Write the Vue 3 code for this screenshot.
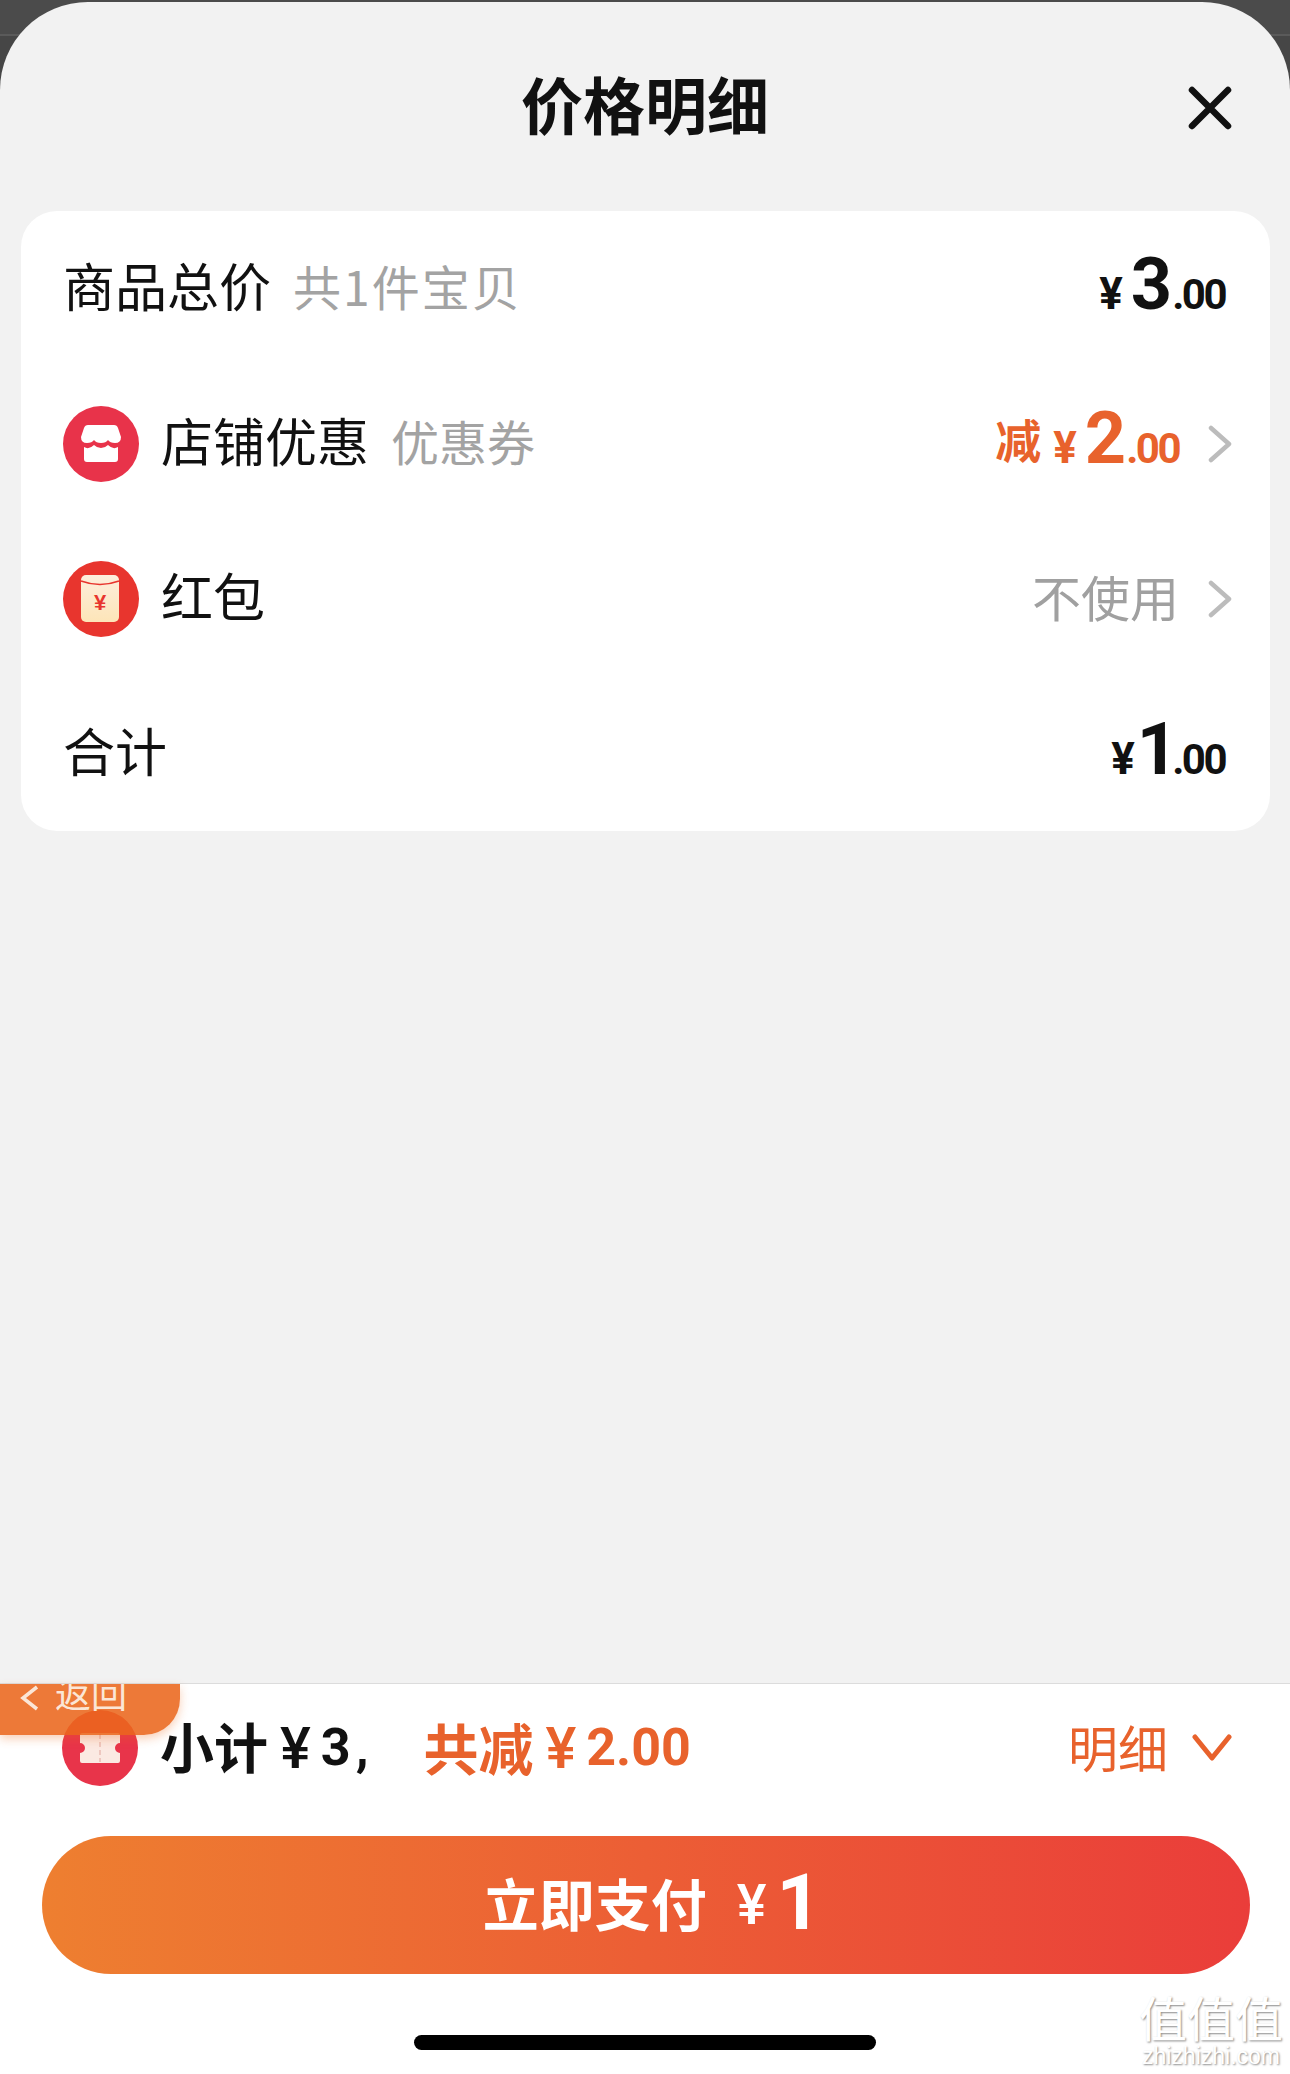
<template>
  <div class="screen">
    <div class="sheet">
      <header class="sheet-head">
        <h1>价格明细</h1>
        <svg class="close" width="44" height="44" viewBox="0 0 44 44">
          <path d="M4 4 L40 40 M40 4 L4 40" stroke="#111" stroke-width="6.5" stroke-linecap="round" fill="none" />
        </svg>
      </header>

      <section class="card">
        <div class="row">
          <span class="label">商品总价</span>
          <span class="sub wide">共1件宝贝</span>
          <span class="price plain">
            <i class="yen">¥</i><b class="big">3</b><i class="cents">.00</i>
          </span>
        </div>

        <div class="row">
          <svg class="badge" width="76" height="76" viewBox="0 0 76 76">
            <circle cx="38" cy="38" r="38" fill="#e8334a" />
            <path fill="#fff" d="M25 19 H51 Q54 19 55 22 L58 31 Q58 37 52 37 Q47 37 45 34 Q43 37 38 37 Q33 37 31 34 Q29 37 24 37 Q18 37 18 31 L21 22 Q22 19 25 19 Z" />
            <path fill="#fff" d="M21 41 Q26 44 31 39 Q34 42 38 42 Q42 42 45 39 Q50 44 55 41 V53 Q55 56 52 56 H24 Q21 56 21 53 Z" />
          </svg>
          <span class="label">店铺优惠</span>
          <span class="sub">优惠券</span>
          <span class="price orange">
            <em class="minus">减</em><i class="yen">¥</i><b class="big">2</b><i class="cents">.00</i>
          </span>
          <svg class="arrow" width="24" height="38" viewBox="0 0 24 38">
            <path d="M3 3 L21 19 L3 35" />
          </svg>
        </div>

        <div class="row">
          <svg class="badge" width="76" height="76" viewBox="0 0 76 76">
            <circle cx="38" cy="38" r="38" fill="#e8352e" />
            <rect x="18" y="14" width="38" height="47" rx="5" fill="url(#packet)" />
            <path d="M18 20 Q37 27 56 20" stroke="#e8352e" stroke-width="1.6" fill="none" />
            <text x="37" y="49" text-anchor="middle" class="packet-yen">¥</text>
            <defs>
              <linearGradient id="packet" x1="0" y1="0" x2="0" y2="1">
                <stop offset="0" stop-color="#fdeedd" />
                <stop offset="1" stop-color="#fde5b8" />
              </linearGradient>
            </defs>
          </svg>
          <span class="label">红包</span>
          <span class="unused">不使用</span>
          <svg class="arrow" width="24" height="38" viewBox="0 0 24 38">
            <path d="M3 3 L21 19 L3 35" />
          </svg>
        </div>

        <div class="row">
          <span class="label">合计</span>
          <span class="price plain">
            <i class="yen">¥</i><b class="big one">1</b><i class="cents">.00</i>
          </span>
        </div>
      </section>
    </div>

    <footer class="foot">
      <div class="back">
        <svg width="20" height="26" viewBox="0 0 20 26">
          <path d="M17 2 L3 13 L17 24" stroke="#fbe6d6" stroke-width="3.5" fill="none" />
        </svg>
        <span>返回</span>
      </div>

      <div class="summary">
        <svg class="badge" width="76" height="76" viewBox="0 0 76 76">
          <circle cx="38" cy="38" r="38" fill="#e8344a" />
          <path fill="#fbe9e2" d="M20 23 H56 Q58 23 58 25 V33 A5 5 0 0 0 58 43 V51 Q58 53 56 53 H20 Q18 53 18 51 V43 A5 5 0 0 0 18 33 V25 Q18 23 20 23 Z" />
          <path d="M38 24 V52" stroke="#eec7bf" stroke-width="2" stroke-dasharray="5 3" />
        </svg>
        <span class="subtotal">小计</span>
        <span class="sum-yen">¥</span>
        <span class="sum-num three">3,</span>
        <span class="saved">共减</span>
        <span class="sum-yen orange">¥</span>
        <span class="sum-num orange">2.00</span>
        <span class="detail">明细</span>
        <svg class="down" width="40" height="28" viewBox="0 0 40 28">
          <path d="M3 3 L20 24 L37 3" />
        </svg>
      </div>

      <button class="pay">
        <span class="pay-text">立即支付</span>
        <span class="pay-yen">¥</span>
        <span class="pay-num">1</span>
      </button>

      <div class="home-bar"></div>

      <div class="mark">
        <div class="mark-cn">值值值</div>
        <div class="mark-en">zhizhizhi.com</div>
      </div>
    </footer>
  </div>
</template>

<script setup>
</script>

<style>
html, body {
  margin: 0;
  background: #484848;
}
</style>

<style scoped>
.screen {
  position: relative;
  width: 1290px;
  height: 2074px;
  overflow: hidden;
  display: flex;
  flex-direction: column;
  padding-top: 2px;
  box-sizing: border-box;
  font-family: "Noto Sans CJK SC", "Roboto", sans-serif;
  color: #111;
  background: linear-gradient(#4b4b4b 34px, #5a5a5a 34px, #5a5a5a 36px, #464646 36px);
}

.sheet {
  flex: 1;
  background: #f2f2f2;
  border-radius: 88px 88px 0 0;
}

.sheet-head {
  height: 209px;
  display: grid;
  grid-template-columns: 1fr auto 1fr;
  align-items: start;
}

.sheet-head h1 {
  grid-column: 2;
  margin: 66px 0 0;
  font-size: 62px;
  line-height: 70px;
  font-weight: 700;
}

.close {
  grid-column: 3;
  justify-self: end;
  margin: 84px 58px 0 0;
}

.card {
  margin: 0 20px 0 21px;
  background: #fff;
  border-radius: 36px;
}

.row {
  height: 155px;
  padding: 0 38px 0 42px;
  display: flex;
  align-items: center;
}

.badge {
  flex: none;
  margin-right: 22px;
}

.label {
  margin-bottom: 8px;
  font-size: 52px;
  line-height: 60px;
}

.sub {
  margin: 0 0 8px 22px;
  font-size: 48px;
  line-height: 60px;
  color: #a3a3a3;
}

.sub.wide {
  letter-spacing: 2px;
}

.price {
  margin-left: auto;
  display: flex;
  align-items: baseline;
  font-family: "Roboto", sans-serif;
  transform: translateY(-4px);
}

.price.plain {
  margin-right: 7px;
}

.price i {
  font-style: normal;
}

.orange {
  color: #e8622c !important;
}

.yen {
  font-size: 44px;
  font-weight: 700;
  margin-right: 8px;
}

.big {
  font-size: 72px;
  line-height: 72px;
  font-weight: 700;
}

.big.one {
  margin-left: -6px;
  letter-spacing: -6px;
}

.cents {
  font-size: 42px;
  font-weight: 700;
  letter-spacing: -2.5px;
}

.minus {
  font-style: normal;
  font-family: "Noto Sans CJK SC", sans-serif;
  font-size: 46px;
  font-weight: 700;
  margin-right: 12px;
  transform: translateY(-5px);
}

.arrow {
  flex: none;
  margin-left: 29px;
}

.arrow path {
  fill: none;
  stroke: #bcbcbc;
  stroke-width: 4.5;
  stroke-linecap: round;
  stroke-linejoin: round;
}

.unused {
  margin: 0 0 6px auto;
  font-size: 49px;
  line-height: 60px;
  color: #a0a0a0;
}

.packet-yen {
  font-family: "Liberation Sans", sans-serif;
  font-size: 22px;
  font-weight: 700;
  fill: #e8352e;
}

.foot {
  position: relative;
  height: 390px;
  flex: none;
  background: #fff;
  border-top: 1px solid #dcdcdc;
}

.back {
  position: absolute;
  top: 0;
  left: 0;
  width: 180px;
  height: 51px;
  overflow: hidden;
  display: flex;
  align-items: flex-start;
  gap: 15px;
  padding-left: 20px;
  box-sizing: border-box;
  background: rgba(235, 103, 28, 0.88);
  border-radius: 0 0 36px 0;
  box-shadow: 0 4px 10px rgba(235, 103, 28, 0.3);
  color: #fbe6d6;
  font-size: 36px;
  line-height: 36px;
}

.back span {
  margin-top: -10px;
}

.back svg {
  margin-top: 1px;
}

.summary {
  height: 128px;
  padding: 0 58px 0 62px;
  display: flex;
  align-items: center;
}

.summary .badge {
  margin-right: 22px;
}

.subtotal {
  margin-bottom: 4px;
  font-size: 54px;
  line-height: 60px;
  font-weight: 700;
}

.saved {
  margin: 0 0 4px 50px;
  font-size: 55px;
  line-height: 60px;
  font-weight: 700;
  color: #e8622c;
}

.sum-yen {
  margin-left: 12px;
  font-family: "Roboto", sans-serif;
  font-size: 58px;
  line-height: 60px;
  font-weight: 500;
}

.sum-num {
  margin-left: 10px;
  font-family: "Roboto", sans-serif;
  font-size: 52px;
  line-height: 60px;
  font-weight: 700;
}

.sum-num.three {
  letter-spacing: 5px;
}

.detail {
  margin: 0 0 4px auto;
  font-size: 50px;
  line-height: 60px;
  color: #e8622c;
}

.down {
  margin-left: 24px;
}

.down path {
  fill: none;
  stroke: #e8622c;
  stroke-width: 5;
  stroke-linecap: round;
  stroke-linejoin: round;
}

.pay {
  display: flex;
  align-items: center;
  justify-content: center;
  width: 1208px;
  height: 138px;
  margin: 24px 0 0 42px;
  padding: 0 0 0 12px;
  border: 0;
  border-radius: 69px;
  color: #fff;
  font-family: inherit;
  background: linear-gradient(90deg, #ee7f30, #ea3d3a);
}

.pay-text {
  margin-bottom: 6px;
  font-size: 56px;
  line-height: 60px;
  font-weight: 700;
}

.pay-yen {
  margin-left: 30px;
  font-family: "Roboto", sans-serif;
  font-size: 56px;
  font-weight: 500;
}

.pay-num {
  margin: -6px 0 0 10px;
  font-family: "Roboto", sans-serif;
  font-size: 78px;
  font-weight: 700;
}

.home-bar {
  width: 462px;
  height: 15px;
  margin: 61px 0 0 414px;
  background: #000;
  border-radius: 8px;
}

.mark {
  position: absolute;
  right: 6px;
  bottom: 8px;
  width: 146px;
  color: #fff;
  text-shadow: 1px 1px 2px #8a8a8a;
  text-align: center;
}

.mark-cn {
  margin-bottom: 8px;
  font-size: 48px;
  line-height: 44px;
}

.mark-en {
  font-family: "Liberation Sans", sans-serif;
  font-size: 23px;
  line-height: 20px;
}
</style>
